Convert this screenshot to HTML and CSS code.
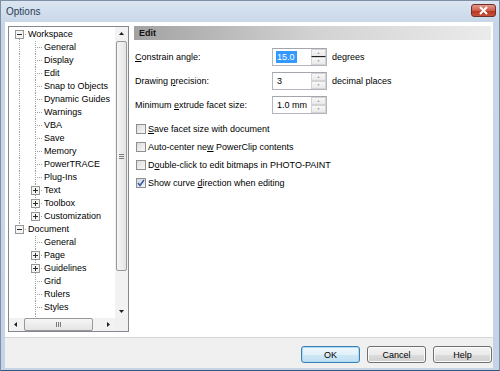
FILE: index.html
```html
<!DOCTYPE html>
<html>
<head>
    <title>Options</title>
    <link rel="stylesheet" href="styles.css">
</head>
<body>
    <svg class="defs" width="0" height="0">
        <symbol id="v" viewBox="0 0 16 13"><path class="dot" d="M7.5 0v13"/></symbol>
        <symbol id="tee" viewBox="0 0 16 13"><path class="dot" d="M7.5 0v13M9 6.5h6"/></symbol>
        <symbol id="first-minus" viewBox="0 0 16 13">
            <path class="dot" d="M7.5 11v2M13 6.5h2"/>
            <rect class="box" x="3.5" y="2.5" width="8" height="8"/>
            <path class="sign" d="M5 6.5h5"/>
        </symbol>
        <symbol id="mid-plus" viewBox="0 0 16 13">
            <path class="dot" d="M7.5 0v2M7.5 11v2M13 6.5h2"/>
            <rect class="box" x="3.5" y="2.5" width="8" height="8"/>
            <path class="sign" d="M5 6.5h5M7.5 4v5"/>
        </symbol>
        <symbol id="last-plus" viewBox="0 0 16 13">
            <path class="dot" d="M7.5 0v2M13 6.5h2"/>
            <rect class="box" x="3.5" y="2.5" width="8" height="8"/>
            <path class="sign" d="M5 6.5h5M7.5 4v5"/>
        </symbol>
        <symbol id="last-minus" viewBox="0 0 16 13">
            <path class="dot" d="M7.5 0v2M13 6.5h2"/>
            <rect class="box" x="3.5" y="2.5" width="8" height="8"/>
            <path class="sign" d="M5 6.5h5"/>
        </symbol>
        <symbol id="up" viewBox="0 0 13 13"><path d="M4 8h5L6.5 5z"/></symbol>
        <symbol id="down" viewBox="0 0 13 13"><path d="M4 5h5L6.5 8z"/></symbol>
        <symbol id="left" viewBox="0 0 13 13"><path d="M8 4v5L5 6.5z"/></symbol>
        <symbol id="right" viewBox="0 0 13 13"><path d="M5 4v5L8 6.5z"/></symbol>
    </svg>

    <div class="window">
        <div class="titlebar">
            <span class="title">Options</span>
            <span class="close">
                <svg width="25" height="13" viewBox="0 0 25 13"><path d="M9 3l7 7M16 3l-7 7"/></svg>
            </span>
        </div>

        <div class="client">
            <div class="main">
                <div class="tree">
                    <div class="tree-top">
                        <div class="tree-list">
                            <div class="node"><svg class="cell"><use href="#first-minus"/></svg><span>Workspace</span></div>
                            <div class="node"><svg class="cell"><use href="#v"/></svg><svg class="cell"><use href="#tee"/></svg><span>General</span></div>
                            <div class="node"><svg class="cell"><use href="#v"/></svg><svg class="cell"><use href="#tee"/></svg><span>Display</span></div>
                            <div class="node"><svg class="cell"><use href="#v"/></svg><svg class="cell"><use href="#tee"/></svg><span>Edit</span></div>
                            <div class="node"><svg class="cell"><use href="#v"/></svg><svg class="cell"><use href="#tee"/></svg><span>Snap to Objects</span></div>
                            <div class="node"><svg class="cell"><use href="#v"/></svg><svg class="cell"><use href="#tee"/></svg><span>Dynamic Guides</span></div>
                            <div class="node"><svg class="cell"><use href="#v"/></svg><svg class="cell"><use href="#tee"/></svg><span>Warnings</span></div>
                            <div class="node"><svg class="cell"><use href="#v"/></svg><svg class="cell"><use href="#tee"/></svg><span>VBA</span></div>
                            <div class="node"><svg class="cell"><use href="#v"/></svg><svg class="cell"><use href="#tee"/></svg><span>Save</span></div>
                            <div class="node"><svg class="cell"><use href="#v"/></svg><svg class="cell"><use href="#tee"/></svg><span>Memory</span></div>
                            <div class="node"><svg class="cell"><use href="#v"/></svg><svg class="cell"><use href="#tee"/></svg><span>PowerTRACE</span></div>
                            <div class="node"><svg class="cell"><use href="#v"/></svg><svg class="cell"><use href="#tee"/></svg><span>Plug-Ins</span></div>
                            <div class="node"><svg class="cell"><use href="#v"/></svg><svg class="cell"><use href="#mid-plus"/></svg><span>Text</span></div>
                            <div class="node"><svg class="cell"><use href="#v"/></svg><svg class="cell"><use href="#mid-plus"/></svg><span>Toolbox</span></div>
                            <div class="node"><svg class="cell"><use href="#v"/></svg><svg class="cell"><use href="#last-plus"/></svg><span>Customization</span></div>
                            <div class="node"><svg class="cell"><use href="#last-minus"/></svg><span>Document</span></div>
                            <div class="node"><span class="gap"></span><svg class="cell"><use href="#tee"/></svg><span>General</span></div>
                            <div class="node"><span class="gap"></span><svg class="cell"><use href="#mid-plus"/></svg><span>Page</span></div>
                            <div class="node"><span class="gap"></span><svg class="cell"><use href="#mid-plus"/></svg><span>Guidelines</span></div>
                            <div class="node"><span class="gap"></span><svg class="cell"><use href="#tee"/></svg><span>Grid</span></div>
                            <div class="node"><span class="gap"></span><svg class="cell"><use href="#tee"/></svg><span>Rulers</span></div>
                            <div class="node"><span class="gap"></span><svg class="cell"><use href="#tee"/></svg><span>Styles</span></div>
                            <div class="node"><span class="gap"></span><svg class="cell"><use href="#tee"/></svg></div>
                        </div>
                        <div class="vscroll">
                            <svg class="arrow"><use href="#up"/></svg>
                            <div class="vtrack"><div class="vthumb"><span class="grip"></span></div></div>
                            <svg class="arrow"><use href="#down"/></svg>
                        </div>
                    </div>
                    <div class="tree-bottom">
                        <div class="hscroll">
                            <svg class="arrow"><use href="#left"/></svg>
                            <div class="htrack"><div class="hthumb"><span class="hgrip"></span></div></div>
                            <svg class="arrow"><use href="#right"/></svg>
                        </div>
                        <div class="corner"></div>
                    </div>
                </div>

                <div class="panel">
                    <div class="panel-head">Edit</div>
                    <div class="fields">
                        <div class="field">
                            <label><u>C</u>onstrain angle:</label>
                            <div class="spin">
                                <span class="value"><span class="selected">15.0</span></span>
                                <span class="spin-buttons hot"><svg class="sb"><use href="#up"/></svg><svg class="sb"><use href="#down"/></svg></span>
                            </div>
                            <span class="unit">degrees</span>
                        </div>
                        <div class="field">
                            <label>Drawing <u>p</u>recision:</label>
                            <div class="spin">
                                <span class="value">3</span>
                                <span class="spin-buttons"><svg class="sb"><use href="#up"/></svg><svg class="sb"><use href="#down"/></svg></span>
                            </div>
                            <span class="unit">decimal places</span>
                        </div>
                        <div class="field">
                            <label>Minimum <u>e</u>xtrude facet size:</label>
                            <div class="spin">
                                <span class="value">1.0 mm</span>
                                <span class="spin-buttons"><svg class="sb"><use href="#up"/></svg><svg class="sb"><use href="#down"/></svg></span>
                            </div>
                        </div>

                        <div class="checks">
                            <div class="check"><span class="box"></span><span><u>S</u>ave facet size with document</span></div>
                            <div class="check"><span class="box"></span><span>Auto-center ne<u>w</u> PowerClip contents</span></div>
                            <div class="check"><span class="box"></span><span>D<u>o</u>uble-click to edit bitmaps in PHOTO-PAINT</span></div>
                            <div class="check">
                                <span class="box checked"><svg width="8" height="8" viewBox="0 0 8 8"><path d="M1 4l2 2.5L7 1"/></svg></span>
                                <span>Show curve <u>d</u>irection when editing</span>
                            </div>
                        </div>
                    </div>
                </div>
            </div>

            <div class="footer">
                <button class="default">OK</button>
                <button>Cancel</button>
                <button>Help</button>
            </div>
        </div>
    </div>
</body>
</html>
```

FILE: styles.css
```css
* {
    box-sizing: border-box;
}

body {
    margin: 0;
    font-family: "Liberation Sans", Arial, sans-serif;
    font-size: 9px;
    color: #000;
    background: #fff;
}

.defs {
    display: block;
    width: 0;
    height: 0;
    overflow: hidden;
}

.dot {
    fill: none;
    stroke: #a0a0a0;
    stroke-width: 1;
    stroke-dasharray: 1 1;
}

.box {
    fill: #f4f4f4;
    stroke: #969696;
}

.sign {
    fill: none;
    stroke: #2b2b2b;
}

/* window frame */

.window {
    width: 500px;
    height: 371px;
    display: flex;
    flex-direction: column;
    background: linear-gradient(to bottom, #dce6f2, #c8d7e8 21px, #c4d4e6);
    border: 1px solid #7d90a6;
    border-bottom-color: #35597b;
}

.titlebar {
    height: 21px;
    display: flex;
    align-items: flex-start;
    justify-content: space-between;
    padding: 3px 3px 0 5px;
}

.title {
    font-size: 10px;
    color: #2b3d55;
    line-height: 13px;
    padding-top: 1px;
}

.close {
    width: 25px;
    height: 13px;
    border: 1px solid #6e3127;
    border-radius: 3px;
    background: linear-gradient(to bottom, #e39a8c, #cf5d4a 50%, #b8321f 51%, #c8523c);
    display: flex;
}

.close svg {
    margin: -1px;
}

.close path {
    stroke: #fff;
    stroke-width: 2;
    fill: none;
}

.client {
    flex: 1;
    margin: 0 6px 2px 4px;
    display: flex;
    flex-direction: column;
    background: #f0f0f0;
}

.main {
    height: 315px;
    display: flex;
    gap: 5px;
    padding: 4px 2px 0 3px;
    background: #fff;
}

/* tree */

.tree {
    width: 121px;
    height: 306px;
    border: 1px solid #828790;
    display: flex;
    flex-direction: column;
}

.tree-top {
    flex: 1;
    display: flex;
    min-height: 0;
}

.tree-list {
    flex: 1;
    overflow: hidden;
    padding: 1px 0 0 3px;
}

.node {
    height: 13px;
    flex: none;
    display: flex;
    align-items: center;
    white-space: nowrap;
}

.cell {
    width: 16px;
    height: 13px;
    flex: none;
}

.gap {
    width: 16px;
    flex: none;
}

.node span:last-child {
    line-height: 13px;
}

.vscroll {
    width: 13px;
    display: flex;
    flex-direction: column;
    background: #f2f2f2;
}

.arrow {
    width: 13px;
    height: 13px;
    flex: none;
    fill: #202020;
}

.vtrack {
    flex: 1;
    padding: 1px 0 0 1px;
}

.vthumb {
    width: 11px;
    height: 230px;
    border: 1px solid #989898;
    border-radius: 2px;
    background: linear-gradient(to right, #f6f6f6, #e4e4e4);
    display: flex;
    align-items: center;
    justify-content: center;
}

.grip {
    width: 5px;
    height: 5px;
    background: repeating-linear-gradient(to bottom, #7a7a7a 0 1px, transparent 1px 2px);
}

.tree-bottom {
    height: 13px;
    display: flex;
}

.hscroll {
    flex: 1;
    display: flex;
    background: #f2f2f2;
}

.htrack {
    flex: 1;
    padding: 0 0 0 2px;
}

.hthumb {
    width: 69px;
    height: 13px;
    border: 1px solid #989898;
    border-radius: 2px;
    background: linear-gradient(to bottom, #f6f6f6, #e4e4e4);
    display: flex;
    align-items: center;
    justify-content: center;
}

.hgrip {
    width: 5px;
    height: 5px;
    background: repeating-linear-gradient(to right, #7a7a7a 0 1px, transparent 1px 2px);
}

.corner {
    width: 13px;
    background: #f0f0f0;
}

/* right panel */

.panel {
    flex: 1;
    display: flex;
    flex-direction: column;
}

.panel-head {
    height: 14px;
    line-height: 14px;
    padding-left: 5px;
    font-weight: bold;
    color: #111;
    background: linear-gradient(to right, #a2a2a2, #d2d2d2 50%, #ebebeb);
}

.fields {
    padding: 8px 0 0 1px;
}

.field {
    height: 18px;
    margin-bottom: 6px;
    display: flex;
    align-items: center;
}

.field label {
    width: 137px;
}

.spin {
    width: 55px;
    height: 18px;
    border: 1px solid #b2b6bd;
    border-top-color: #a3a6ad;
    display: flex;
}

.value {
    flex: 1;
    padding-left: 4px;
    display: flex;
    align-items: center;
}

.selected {
    background: #3399ff;
    color: #fff;
    padding: 1px 2px 1px 1px;
    margin-left: -1px;
}

.spin-buttons {
    width: 15px;
    display: flex;
    flex-direction: column;
}

.sb {
    flex: 1;
    width: 15px;
    border: 1px solid #d3d3d3;
    background: linear-gradient(to bottom, #f7f7f7, #e9e9e9);
    fill: #8a8a8a;
}

.hot .sb:first-child {
    border-bottom: 1px solid #202020;
}

.unit {
    margin-left: 5px;
}

.checks {
    margin-top: 5px;
}

.check {
    height: 18px;
    display: flex;
    align-items: center;
    padding-left: 1px;
}

.check .box {
    width: 10px;
    height: 10px;
    border: 1px solid #8f8f8f;
    background: linear-gradient(135deg, #dcdcdc, #f8f8f8);
    margin-right: 2px;
    display: flex;
    align-items: center;
    justify-content: center;
}

.check .checked {
    background: linear-gradient(135deg, #cfd8e6, #f4f7fb);
}

.checked path {
    fill: none;
    stroke: #3d5a9e;
    stroke-width: 1.6;
}

/* buttons */

.footer {
    flex: 1;
    border-top: 1px solid #d6d6d6;
    display: flex;
    justify-content: flex-end;
    align-items: flex-start;
    gap: 7px;
    padding: 8px 1px 0 0;
}

.footer button {
    width: 59px;
    height: 17px;
    padding: 0;
    font-family: "Liberation Sans", Arial, sans-serif;
    font-size: 9px;
    color: #000;
    border: 1px solid #707070;
    border-radius: 3px;
    background: linear-gradient(to bottom, #f4f4f4, #ebebeb 50%, #dddddd 51%, #cfcfcf);
    box-shadow: inset 0 0 0 1px #fbfbfb;
}

.footer .default {
    border-color: #3c7fb1;
    box-shadow: inset 0 0 0 1px #a8dcf6;
    background: linear-gradient(to bottom, #eef7fc, #e2f0f9 50%, #cfe7f6 51%, #bfdff2);
}
```
